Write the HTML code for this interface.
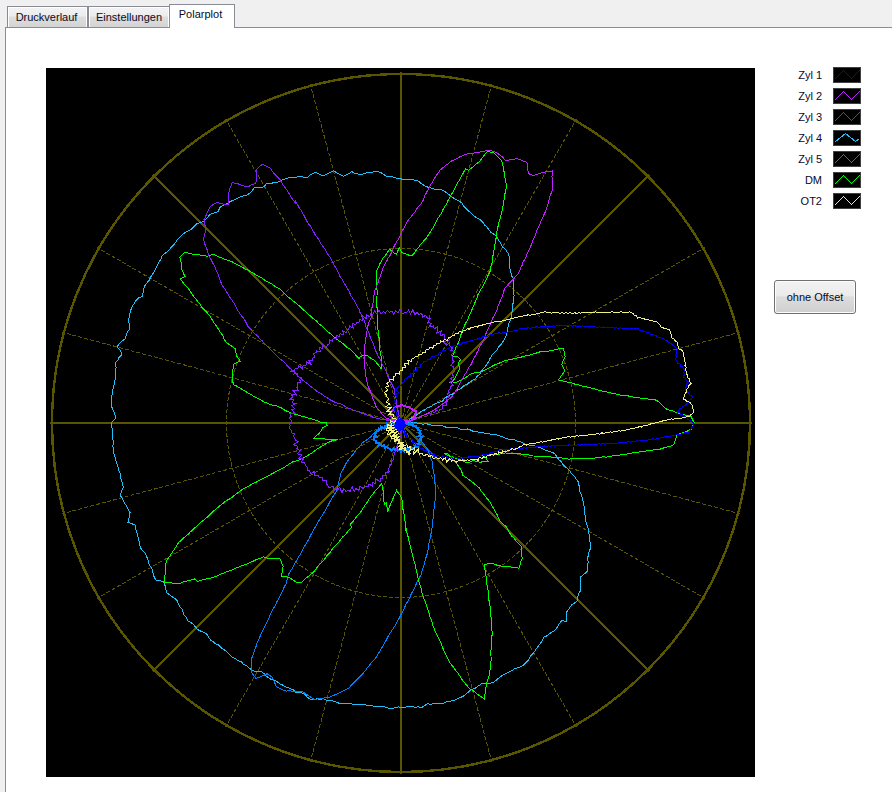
<!DOCTYPE html>
<html><head><meta charset="utf-8">
<style>
*{margin:0;padding:0;box-sizing:border-box}
html,body{width:892px;height:792px;overflow:hidden;background:#f0f0f0;font-family:"Liberation Sans",sans-serif;font-size:11px;color:#0a0a28}
.tab{position:absolute;border:1px solid #898c95;border-bottom:none;background:linear-gradient(#f3f3f3 0,#ececec 45%,#dedede 50%,#d4d4d4 100%);box-shadow:inset 1px 1px 0 #fff, inset -1px 0 0 #fff}
.tab span{position:absolute;left:0;right:0;text-align:center}
.panel{position:absolute;left:5px;top:27px;width:900px;height:800px;background:#fff;border-left:1px solid #898c95;border-top:1px solid #898c95}
.sel{background:#fff;box-shadow:none;z-index:2}
.lt{position:absolute;right:70px;height:16px;line-height:16px;text-align:right}
.lb{position:absolute;left:833px}
.btn{position:absolute;left:774px;top:280px;width:82px;height:34px;border:1px solid #707070;border-radius:3px;background:linear-gradient(#f2f2f2 0,#ebebeb 45%,#dddddd 50%,#cfcfcf 100%);box-shadow:inset 0 0 0 1px #fcfcfc;text-align:center;line-height:32px}
</style></head><body>
<div class="panel"></div>
<div class="tab" style="left:7px;top:6px;width:81px;height:21px"><span style="top:4px;left:-2px">Druckverlauf</span></div>
<div class="tab" style="left:88px;top:6px;width:82px;height:21px"><span style="top:4px">Einstellungen</span></div>
<div class="tab sel" style="left:169px;top:4px;width:66px;height:24px"><span style="top:3px;left:-3px">Polarplot</span></div>
<svg width="709" height="709" viewBox="46 68 709 709" style="position:absolute;left:46px;top:68px" shape-rendering="crispEdges">
<rect x="46" y="68" width="709" height="709" fill="#000"/>
<path d="M401 423L740 332.2M401 423L705 247.5M401 423L576.5 119M401 423L491.8 84M401 423L310.2 84M401 423L225.5 119M401 423L97 247.5M401 423L62 332.2M401 423L62 513.8M401 423L97 598.5M401 423L225.5 727M401 423L310.2 762M401 423L491.8 762M401 423L576.5 727M401 423L705 598.5M401 423L740 513.8" stroke="#5a5600" stroke-width="1" stroke-dasharray="4 2" fill="none"/>
<circle cx="401" cy="423" r="174.5" stroke="#5a5600" stroke-width="1" stroke-dasharray="4 2" fill="none"/>
<path d="M401 423L752 423M401 423L649.2 174.8M401 423L401 72M401 423L152.8 174.8M401 423L50 423M401 423L152.8 671.2M401 423L401 774M401 423L649.2 671.2" stroke="#5a5600" stroke-width="2" fill="none"/>
<circle cx="401" cy="423" r="349" stroke="#5a5600" stroke-width="2.4" fill="none"/>
<path d="M401 423L404.9 420.8L409.3 419.9L412 417.4L415.2 415.9L418.2 414L421 411.6L424.3 410.1L427.1 408.1L430.3 406.9L433.1 405.1L436.1 403.4L439.2 402.4L442.3 401.2L444.4 398.7L446.8 396.7L449.6 395.2L452.6 394L455 391.9L457.8 389.7L461.3 388.4L463.7 385.6L467.1 384.3L469.9 382L472.7 380.1L475.2 378.7L477.2 376.3L479.7 374.3L481.1 371.4L483.2 369.1L485.2 366.8L486.8 364.1L488.7 361.7L489.9 358.7L491.5 356L493.3 353.5L495.8 351.5L497.6 349L499.2 346.3L501.3 344L503.1 341.5L504.6 338.9L506.1 335.9L507 332.8L507.2 329.5L508.2 326.4L509 323.3L510.3 320.2L511.2 317.1L511.3 313.8L512.6 310.8L512.1 307.6L512.7 304.5L513.7 301.5L513.5 298.3L514.2 295.3L513.3 292.2L513.7 289L513.9 285.8L513.5 282.6L513.6 279.3L511.9 276.3L511.1 273.1L510.1 270L509.7 266.8L509.2 263.7L509.4 260.5L509.5 257.3L508.5 254L505.4 249.2L502.6 247L501.1 243.9L499.2 241.1L497.6 237.8L494.5 234.6L490.8 232.1L488.7 229.7L487 227L484.4 225L482.8 222.3L480.8 220.1L477.5 218.2L474.2 216.3L471.6 213.3L468.7 211.2L466.1 208.7L463.7 206L461.8 202.9L458.9 201L455.8 199.3L452.7 197.5L449.9 195.4L446.9 193.1L443.8 190.8L440.2 189.4L437 189.2L433.8 189L430.7 187.9L428.1 187.2L425.1 186L422.4 184.4L420 182.6L418 180.8L414.8 180.2L411.7 179.5L408.5 179.5L405.3 179.8L402.2 179.1L399.1 178.7L395.9 178L392.9 176.9L389.7 176.6L386.7 176.6L384.1 174.8L381.5 172.9L378.7 172L374.6 171.8L370.5 172.2L367.3 172.7L364.1 173.6L361.3 175L358.1 174.1L354.7 173.4L351.8 171.6L348.1 174.1L343.4 176.3L340.6 174.8L337.9 173.4L335.2 171.8L333.3 170.6L330.3 172.5L327.1 174.1L322.9 175.9L319.1 173.9L316.1 172.5L312.8 173.3L310.1 175L307.5 177.4L304.3 177.2L301.2 176.8L298.2 176.4L295.2 177.6L291.7 177.5L288.4 177.7L285.4 178.9L282.3 179.9L279.3 181.4L276.2 182.6L273.1 182.9L270.1 183.4L266.8 183.1L263.9 186.8L260.8 187.9L257.5 187.2L254.2 187.8L251.5 191.5L248.1 194.4L245.1 195.9L241.9 196.1L238.2 197.7L235.1 199.7L231.2 201.1L227.5 203.1L223.7 205.2L220.2 207.1L218 211.5L214 213.1L209.8 214.4L207 218L204 221.5L200.6 222.4L196.9 223.6L193.6 226.7L190.8 229.7L187.6 231.2L184.5 232.9L181.7 235.3L179.3 237.6L177.1 240.2L175.2 243L173.2 245.5L170.6 248.1L168.2 250.9L165.3 253.1L162.2 255.6L161.4 258.5L159.7 261L158.1 263.6L157 266L155.7 268.9L154.3 271.7L152.6 274.3L150.8 276.7L149.4 279.9L147.2 282.7L144.9 285.7L143.6 289.3L143 293.1L142.1 296.5L138.8 297.8L136.3 300.1L134.7 302.7L132.9 305.3L131.7 308L130.5 310.8L129.6 314.4L129 318L128.7 321.9L129.5 325.7L129.3 329.4L127.2 332.3L126.2 335.7L124.9 339L121.8 341.2L119.1 343.8L117.2 346.8L119.2 349.2L121 351.7L121.6 354.7L119.2 357.1L117.8 360.2L115.1 362.8L116.1 367.3L115.7 370.5L115.6 373.7L115 376.9L115 380.2L114.9 383.3L113.3 386.4L112.9 389.5L112.7 392.7L111.8 395.8L112 399L111.5 402.2L111.4 405.3L112.3 408.5L113.7 411.5L114.9 414.6L115.9 418.4L113.2 420.5L111.2 422.6L111.6 426.3L112.5 429.9L112 433.8L112.7 436.9L113 440L113.2 443.2L112.9 446.4L113.7 449.6L113.7 452.8L114.7 455.9L115.5 459L116.2 462.2L117.7 465.1L118.2 468.3L119.3 471.4L120.5 474.5L120.3 477.9L121.8 480.9L122.6 484.1L123.2 487.3L121.6 491.3L120.3 495.2L121.8 497.9L123.3 500.6L124.5 503.4L126.8 506.2L128.2 509.4L130.1 512.7L129.7 515.9L128.5 518.9L128 522.2L132 523.8L135.5 525.4L135.9 529.4L137.2 533.2L137.8 536.2L138.6 539.1L139.3 542.1L139.7 545.1L140.6 548.1L142.7 550.5L144.9 553L146.3 555.7L147.6 558.8L148.5 562.1L149.5 565.3L151.6 568.1L152.7 571.3L153.4 574.6L154.4 577.8L156.5 580.6L160.1 580.8L163.8 582.1L165.1 585.7L165.9 589.4L166.4 592.3L169.2 594.6L172.1 596.7L174.7 598.4L177.1 600.7L178.3 603.7L179.8 606.5L182.1 608.9L182.9 612L184.1 615.1L186.4 617.4L187.6 620.7L190.5 622.4L193.3 624.4L195.4 627L197.6 629.5L200.7 631.1L203.9 632.6L207 634.3L208.8 637.4L210.5 640.1L213.1 641.7L215.4 643.8L218.5 644.8L220.6 647.1L222.9 649.1L225.7 650.6L227.9 652.7L230.2 655.2L232.8 657.4L235.6 658.9L238.5 660.8L241.2 661.6L243.3 664.3L246.5 665.8L249.1 668L251.3 669.7L254.3 671.1L257.6 671.3L261.1 671.5L264.1 673.7L266.7 676.5L269.7 678.7L273.3 680.1L276.7 681.2L279.4 683.6L282.6 685.1L285.6 686.8L289.5 688.2L293.1 689.8L296 692.6L301.4 692.6L304.8 694.2L307.4 697.2L310.7 699.4L313.9 699.7L317 698.7L320.2 699.4L323.5 698.6L326.4 700.1L329.6 700.6L332.9 701L336 701.9L339 703.2L342.3 703.1L345.5 703.2L348.6 703.9L351.8 704L355 704.1L358.1 704.4L361.3 704.4L364.5 704.7L367.6 705.2L370.7 705.6L373.9 706.3L377 706L380.2 706.1L384 706.8L387.7 707.9L391 708.4L394.7 707.9L398.4 707L402.2 707.3L405.4 707.1L408.5 706.2L411.8 706L414.8 707.3L418.1 706.8L421.4 707.8L424.4 705.7L427.5 703.8L430.7 704.2L433.8 703.6L437 703.4L440.2 703.5L443.5 703.3L446.5 701.8L449.8 701.4L453 700.6L456.1 699.5L459.1 698L462.2 696.7L464.9 695.3L467.9 692.4L471.1 689.5L474.8 688.4L477.8 686.3L481 684.1L484.1 683L487.5 683.3L490.8 683L494.1 682.1L496.9 679.5L499.9 677.1L503 674.9L506.3 673.5L509.3 671.6L512.5 670.2L515.1 668.5L518.3 667.8L521.2 666.7L523.6 664.8L525.9 662.7L528.7 660L530.3 656.4L533.3 653.1L535.8 649.6L538 646.6L540.2 643.6L542.3 640.5L544.2 637L547.1 635.7L549.5 633.5L552.3 632L554.6 630.6L557 627.6L558.8 624.3L561.8 620.4L566.5 621.8L566.3 618.6L566.6 615.4L566.5 612.2L568.4 609.8L570.1 607.2L571.6 604.8L576.9 601.5L577.6 597.6L578.6 593.8L580.8 590.2L580.1 587L580.7 583.8L581 580.7L580.3 577.1L583.8 574.5L587.2 571.3L587.3 568.1L587.7 564.9L588.2 561.8L587.5 558.5L588.3 555.4L589 552.2L590.1 549.2L591 545.8L590.3 542.6L589.2 539.6L589.3 536.4L588.9 533.3L588.6 530.1L587.6 527L586.4 523.5L585.6 520L585.3 516.3L584.5 512.9L584.7 509.5L584 506.3L583.4 503.1L582.7 499.9L582 496.8L581 493.7L579.3 490.7L579.3 487.4L578.8 484.1L577.8 480.9L575.8 478.5L574.1 475.8L571.5 473.8L570.1 470.9L567.9 468.7L565.3 466.8L563.1 464.5L561.3 461.7L558.8 459.8L557 457.1L555.2 454.3L552.5 452.3L549.2 451.5L546 450.4L543 449L539.9 447.6L536.7 446.6L533.6 445.5L530.1 445.2L526.9 444.5L523.7 443.6L520.8 441.8L517.5 441.1L514.5 439.9L511.1 439.6L507.8 438.9L504.8 437.8L501.7 436.5L498.6 435.4L495.4 434.7L492.1 434.6L488.9 433.8L485.7 433.3L482.4 432.7L479.1 432.6L476 431L472.9 431.2L470 429.8L467.1 428.9L463.8 429.7L460.8 429.2L457.9 428.1L454.9 427.1L451.8 427.2L448.7 427.2L445.6 427.1L442.7 425.7L439.6 425.9L436.3 425.3L432.9 425.5L429.7 424.8L426.4 423.6L423 424.2L419.8 423.2L416.5 423L413.1 422.1L410.1 422.2L407.1 423L404 422.4L401 423" stroke="#20c0f8" stroke-width="1" fill="none"/>
<path d="M388.5 423.8L384.1 426.8L380.1 428.7L376.3 430.8L373.3 433.9L370.3 437.1L367.7 439L365.2 441L362.4 442.7L360.1 446L357.4 448.8L354.7 451.7L353.1 454.3L351.1 456.6L349.2 459L347.3 461.3L345.7 463.9L344.3 467L342.8 470L341 473L340.2 476.4L339.4 479.8L338.5 483.2L337.7 486.6L336.9 490.1L335.4 492.9L333.6 495.4L332.1 498.2L330.4 500.7L329 503.6L327.5 506.3L325.9 509L324.5 511.7L322.9 514.4L321.1 517L319.5 519.6L317.9 522.3L316.5 525.1L314.8 527.7L313.2 530.4L311.8 533.2L310.3 535.9L309.1 538.8L307.4 541.4L305.9 544.1L304.2 546.8L302.7 549.5L301.3 552.3L299.9 555.1L298 557.7L296.6 560.6L295 563.3L293.5 566.1L291.9 568.9L290.2 571.6L288.4 574.3L287.7 577.5L286.7 580.6L286 583.8L284.5 586.6L283.1 589.5L281.9 592.3L280.5 595.2L279.1 598L277.4 600.6L276.1 603.4L274.8 606.3L273.1 609L271.6 611.7L270.3 614.6L269.2 617.5L267.8 620.4L266.5 623.2L265.1 626L263.7 628.9L262.3 631.6L260.9 634.4L259.6 637.5L258.1 640.6L256.9 643.7L255.9 646.9L254.7 650.1L253.5 653.3L252.4 656.4L251.3 659.6L251.5 662.7L251.4 665.9L251.1 669L251.3 672.1L253.6 675.3L255.9 678.5L259.9 677.1L263.8 675.3L267 673.7L271.9 676.9L273.4 680L274.9 683.2L276.4 686.6L279.5 688.2L282.6 689.8L285.9 691.1L289 690.9L292 691.1L295.1 691.3L298.2 691.2L301.2 691.2L304.5 692.9L307.6 695L310.7 697.2L313.9 699.3L317.1 699L320.2 698.8L323.4 698.2L326.5 697.6L329.5 697.2L332.8 695.8L336 694.3L339.2 692.9L342.4 691.3L345.5 689.7L348.8 688.1L351.2 685.5L353.7 683L356 680.3L358.7 677.9L361.1 675.3L363.3 673.1L365.3 670.7L367.1 668.2L369 665.8L370.9 663.4L373 661.1L375.1 658.8L376.9 656.3L378.3 653.5L380.1 650.8L381.7 648.1L383.3 645.3L384.8 642.5L386.4 639.8L387.8 637L389.4 634.2L391.1 631.6L392.9 629.1L394.5 626.5L396.2 623.9L397.6 621.2L399 618.5L400.3 615.8L401.9 613.2L403.3 610.5L404.5 607.7L405.7 604.9L407.1 602.3L408.6 599.6L410 596.8L411.3 593.9L412.8 591.2L414.4 588.5L415.6 585.6L416.8 582.7L418.2 579.9L419.7 577.1L421.2 574.4L422 571.2L423.1 568.1L424.1 564.9L424.9 561.7L425.6 558.5L426.8 555.5L427.5 552.3L428.3 549.1L428.6 545.9L429.1 542.8L429.9 539.6L430.4 536.5L431.2 533.3L431.7 530.2L432.1 527L432.4 523.8L432.8 520.6L433.2 517.4L433.8 514.3L433.8 511.1L434.1 507.9L434.4 504.7L435 501.5L435.1 498.3L435.2 495.1L435.5 492L435.2 488.9L435.2 485.9L434.9 482.8L434.6 479.8L434.3 476.7L434 473.7L433.3 470.7L432.7 467.7L432.6 464.6L432.3 461.6L430.6 457.9L429.6 454.1L428.2 450.3L426.2 447.5L424.3 444.7L422.2 442L420.7 438.9" stroke="#0080ff" stroke-width="1" fill="none"/>
<path d="M400.4 422.4L398.8 421.2L397.7 425L395.8 421.9L394.6 424.7L393 423.2L391.5 423.6L390 423.4L389.7 425.5L386.7 423.7L387 427L384.9 426.6L384.5 428.6L381.3 426.6L381.4 429.5L378.7 428.3L378.5 430.7L376.9 431.2L376.2 432.7L374.3 433.7L376.5 436.7L373.8 437.2L374.1 438.2L374.2 440.3L376.1 440.7L376 443.1L378.6 442.8L378.5 446L381 444.2L382.1 446.2L384.3 445L385.1 447.6L387.2 447L388.5 448.5L390.1 448.6L391.3 450.8L393.4 448.5L394.8 449.8L396.6 448.8L398 450.6L399.5 449.5L401.1 451.8L402.7 448.9L404.3 451.4L405.9 449.3L407.8 451.1L408.8 449.1L410.8 449.6L411.8 447.4L414.1 448.7L415 446.2L418.1 447.1L416 444.1L419.3 443.9L418.4 441.5L419.8 440.4L420.2 439L422 437L418.5 436.1L421.1 433.9L419.3 432.6L420.3 430.8L418.2 430.1L417.8 428.1L416.1 427.6L415.8 425.6L413.2 425.9L413.1 423.9L411.4 425.2L410 423.2L408.2 424.7L406.7 423.4L405.1 423.6L403.7 422L402 422.7L400.4 422.4" stroke="#0080ff" stroke-width="2" fill="none"/>
<path d="M381.9 368.3L382 364.9L381.6 361.5L381.5 358.2L380.6 354.2L379.8 350.1L379.9 346.7L380 343.3L379.5 340L378.9 336.9L378.8 333.7L378.2 330.6L377.6 327.5L377.8 324.3L377.3 321.1L377.2 318L377.1 314.8L377.3 311.6L377.1 308.4L376.8 305.2L376.6 302L376.8 298.8L377 295.6L377.3 292.4L376.9 289.2L377 286L376.9 282.8L377 279.6L376.7 276.4L376.7 273.2L376.9 270L378.8 267L380 263.6L381.7 260.5L383.5 257.5L385.7 255L387.5 252.1L389.8 249.3L392.7 252L396.3 254.4L397.7 251.2L399.3 247.8L402.2 252.8L405.4 253.7L408.5 255L411.9 256L414.1 253.4L415.9 250.5L418.2 248L420.1 245.2L422.2 242.6L424.5 240.1L426.7 237.6L428.5 234.7L430.5 232L432.1 229.2L433.8 226.4L435.3 223.6L436.7 220.6L438.3 217.8L440.1 215.1L442 212.4L443.1 209.3L444.8 206.5L446.6 203.8L447.7 200.9L449.5 198.4L450.6 195.6L452.3 193L453.8 190.4L455.3 187.8L456.6 185L458 182.3L459.6 179.7L461 177L462.6 174.4L463.9 171.7L465.4 169L468.3 170.3L470.9 168.5L473.3 166.6L475.5 164.5L478.1 162.7L480.6 160.1L482.8 157.2L485 154.3L487.5 151.5L490.7 152.1L494.1 152.9L496.6 155.7L499.4 158.2L501.9 161.1L502.4 164.1L503.3 167L503.6 170L504.4 172.9L504.7 175.9L505.1 178.9L505.7 181.9L506.7 184.8L506.1 188L505.7 191.1L504.8 194.2L504.8 197.4L504 200.5L503.3 203.7L502.9 206.8L502.1 209.9L501.7 213.2L500.6 216.3L500 219.5L498.9 222.6L498.1 225.7L497.7 229L496.8 232.1L496 235.2L496 238.5L495.5 241.6L494.8 244.8L494.5 248L493.6 251.1L493.3 254.2L492.6 257.4L492.4 260.6L491.8 263.7L490.9 266.8L490.7 270.1L489.4 272.9L487.9 275.7L486.6 278.5L485.4 281.4L484 284.2L482.6 287.1L480.8 289.6L479.3 292.4L477.7 295.1L476.9 298.1L475.5 300.9L474.6 303.9L473.3 306.7L472 309.5L471 312.3L469.5 315.1L468.4 317.9L466.9 320.9L465.2 323.9L464.1 327L462.2 329.9L461.3 333.3L460.5 336.7L459.3 340L458.2 343.2L456.5 346L455.3 349.1L453.9 352.7L452.4 356.5L457.4 356.3L460.7 359.4L458.4 363.3L459.8 368.5L457.4 373.4L454.6 378.6L452.4 381.5L449.5 382.9L452.3 381.7L455.5 382.7L460.5 380.5L463.4 378.7L466.3 377.1L469.3 375L472.6 373.3L475.6 372.8L478.7 372.4L481.8 371.6L484.7 370.3L487.2 368.7L490 367.4L492.9 365.8L495.8 364.4L498.9 363.3L501.8 362L504.9 360.8L508.1 360L511.3 359.4L514.5 358.8L517.6 357.8L520.8 357.2L523.9 356.4L527 355.3L530.3 355L533.4 353.9L536.5 353L539.6 352L542.9 351.5L546.3 351.3L549.8 350.9L553.1 350.2L556.5 349.4L559.9 348.6L563.5 348.5L564.2 352.4L565.1 356.4L563.4 360.3L561.8 364.3L563.1 367.6L564.7 370.4L562.9 373.8L560.5 376.8L558.7 379.9L561.8 380.8L565 381.6L568.2 382.2L571.4 382.8L574.4 384L577.7 384.5L580.8 385.5L583.9 386.6L587.1 387L590.3 387.7L593.4 388.7L596.5 389.5L599.7 390.4L602.8 391.4L606 391.8L609.2 392.5L612.4 393.3L615.5 393.8L618.6 394.8L621.8 395.4L624.9 395.9L628.1 395.9L631.2 396.7L634.4 397.2L637.6 397.5L640.7 398.2L643.9 398.6L647.1 398.9L650.3 399.2L653.4 399.7L656.8 400.2L659.1 402.3L661.3 404.5L663.5 406.6L665.9 408.8L669 409.9L672.3 410.8L675.4 412.1L678.6 413.2L681.7 414.2L684.9 414.9L688.1 415.5L691.2 416.4L692.5 419.7L694.4 422.7L692.6 425.7L691.3 429.2L688.5 430.5L685.7 431.8L682.7 432.8L679.7 433.8L676.7 435.2L675.9 438.5L674.7 441.5L673.9 444.8L670.4 446.1L666.7 447L663.2 448.1L659.6 449.3L656.5 449.7L653.3 449.9L650.2 450.6L647 450.9L643.8 451.3L640.7 451.6L637.6 452.3L634.4 452.6L631.2 453.1L628.1 453.8L625 454.3L621.8 454.6L618.7 455.3L615.5 455.2L612.3 455.9L609.2 456.6L606.1 457.1L602.8 456.9L599.7 457.5L596.6 457.9L593.4 458.2L590.3 458.4L587.1 458.2L583.9 458.2L580.8 458.2L577.6 458.3L574.5 458.9L571.3 458.9L568.1 459.1L565 458.5L561.8 458L558.7 457.6L555.5 457.8L552.4 457.2L549.2 456.7L546.1 456.3L542.9 456.5L539.7 456.4L536.5 456.2L533.4 456L530.4 455.2L527.4 454.7L524.3 454.4L521.2 454L518.2 453.8L515.1 453.7L512 453.7L508.9 453.6L505.9 452.9L502.1 453.7L498.3 454.3L494.5 454.6L490.7 455.1L486.9 454.8L483.4 454.3L481.9 455.3L485.7 457.8L488.2 461.8L485 461.4L481.8 461.6L480.7 462.6L476.9 461.4L473.1 460.6L467.9 463.1L464.8 461.8L461.7 460.3L458.3 459.2L455 457.8L451.6 456.5L447.7 455.2L444 453.6L447.9 454L450.2 457.1L453 459.9L455.7 462.7L457.8 465.2L459.6 468L461.4 470.6L463 475.4L465.5 477.2L468 478.9L470.4 480.7L473.5 483L476.4 485.6L479.5 488.1L481.1 490.8L483.2 493.2L484.8 495.9L486.9 498.3L489 500.7L490.7 503.3L492.2 506.1L493.9 508.8L495.2 511.6L496.9 514.3L498 517.2L499.4 520.1L501.6 522.5L504 524.8L506.4 527L508.1 530.1L509.7 533.2L511.6 536L514.1 538.2L516.1 541L518.6 543.3L521 545.9L521.4 549.1L521.3 552.3L521.8 555.4L522.3 558.6L520.9 561.6L520.2 564.9L519 568.1L515.9 567.7L512.8 567.2L509.6 566.8L506.5 566.5L503.3 566.4L500.1 565.8L496.9 565.2L493.8 564L490.6 563.1L487.4 563.8L484.4 564.9L484.9 568L485.1 571.2L485.5 574.4L486.3 577.5L486.6 580.6L486.7 583.8L487.4 587L488 590.1L488.5 593.3L488.6 596.4L488.8 599.6L489.5 602.7L490 605.9L490.3 609L490.6 612.2L490.8 615.4L491.3 618.5L491.5 621.7L491.9 624.8L491.8 628L492 631.2L492.2 634.3L491.7 637.5L492 640.6L491.8 643.8L491.2 646.9L491 650.1L490.9 653.2L491 656.4L491.1 659.6L490.8 662.7L490.9 665.9L490.3 669.1L489.5 672.3L489.1 675.5L488.2 678.6L487.2 681.7L486.4 684.8L485.8 688L485.3 691.6L484.8 695.3L484.2 699.2L481.7 697.2L479 695.4L476.5 693.4L474 691.4L471.3 689.7L468.6 687.9L466.8 685.3L464.8 682.9L462.7 680.5L461 677.8L459.3 675.2L457.5 672.6L455.5 670.1L453.7 667.5L451.8 665.1L449.9 662.6L448.4 659.8L446.9 657L445.7 654L444.1 651.3L442.9 648.3L441.8 645.3L440.6 642.4L439.3 639.5L437.7 636.7L436.4 633.8L435.1 630.9L433.9 628L432.8 625.1L432 622.2L431.2 619.2L429.9 616.4L429.1 613.4L428.2 610.5L427.1 607.6L426.1 604.7L425.4 601.7L424 598.9L423.1 596L421.9 593.1L421.3 590.1L420.8 587.1L419.9 584.3L418.8 581.4L418.2 578.5L417.6 575.6L417 572.6L416.2 569.7L415.5 566.8L414.9 563.8L414.1 561L413.2 558.1L412.8 555.1L411.7 552.3L411 549.1L410.1 545.9L409.5 542.7L408.4 539.7L408 536.4L407 533.3L405.9 530.2L405.7 526.9L406.6 530L405.8 526.8L405.4 523.5L404.9 520.3L404.6 517L403.9 513.7L403.2 510.5L402.6 507.3L402.3 504L402.1 500.6L400.6 495.5L398.5 493.2L396.6 490.5L395 494L393.5 497.4L392 500.8L390.4 504.5L388.9 508.2L387.5 512.1L387.1 508.7L386.9 505.3L386.7 502.1L384.3 504.5L383.8 501L383.6 497.5L383.4 494.1L383.2 490.5L382.4 487.1L381.6 483.7L379.5 486.1L377.7 488.6L375.4 490.8L373.5 493.3L371.3 495.5L369.6 498.4L367.8 501.2L366 504L364 506.7L362.2 509.5L360.5 512.4L358.2 514.7L356.2 517.2L354.3 519.8L352.2 522.3L350.1 524.6L351.9 527.1L349.6 529.4L347.5 531.8L345.5 534.4L343.1 536.6L340.9 539L339.2 541.8L336.9 544.1L334.6 546.4L332.5 548.8L330.8 551.6L328.5 553.9L326.4 556.3L324.6 559.1L322.6 561.7L320.1 563.8L318 566.2L316.1 568.8L314.1 571.4L311.6 573.7L309.1 575.9L306.3 577.8L303.8 580.1L301.3 582.5L296.1 582.1L292.7 579.6L289 577.6L285.2 576.5L281.4 576L282 572.8L282.5 569.7L283.1 566.3L281.5 562.4L279.6 558.1L275.9 558.6L272.2 558.4L268.6 558.5L263.7 556.8L260.6 558.2L257.4 559.2L254.3 560.6L251.2 562.1L248.1 563.5L245 564.8L241.8 565.8L238.7 567.2L235.5 568.2L232.8 569.6L229.9 570.6L227.1 571.7L224.4 572.8L221.5 573.7L218.9 575.3L216 576.2L213.3 577.5L210.1 578.2L207 578.9L203.8 579.5L200.7 580.5L197.5 581.3L194.3 578.8L190.9 580.2L187.4 581L183.9 581.8L180.5 583.1L177 583.9L173.9 583.3L170.7 582.7L167.5 582.6L164.7 582.3L164.8 578.8L165 575.4L165.5 572L165.3 568.5L165.8 565.1L166.1 561.8L167.7 559L169.7 556.4L171.4 553.6L173.2 550.9L175 548.2L176.9 545.6L178.5 542.7L180.9 540.5L183.2 538.3L185.7 536.2L188.2 534.2L190.4 531.8L192.9 529.8L195.2 527.5L197.5 525.3L199.7 523.2L202.1 521.2L204.6 519.5L206.9 517.4L209.2 515.5L211.3 513.3L213.5 511.1L215.8 509.1L218.2 507.2L220.5 505.2L222.9 503.4L225.2 501.3L228 499.8L230.7 498.3L233.2 496.4L235.6 494.4L238.1 492.6L240.6 490.7L243.2 489L246 487.7L248.7 486.1L251.3 484.4L254.1 483.1L257 481.8L259.7 480.2L262.4 478.7L265.2 477.3L268 475.9L270.8 474.4L273.6 473L276.3 471.3L279.1 470.1L281.8 468.5L284.6 467.1L287.2 465.3L289.8 463.7L292.5 462L295.7 461.1L298.9 460L301.9 458.7L304.9 457.1L307.6 455.6L310.3 454L312.9 452.2L315.4 450.2L318.4 448.3L321.4 446.5L324.4 444.7L327.5 442.9L330.6 441.2L334.5 440.4L338.2 439.1L333.6 439.7L330.6 439.7L327.6 439.4L324.2 438.8L320.8 438.5L317.4 438.1L314 438.3L316.4 435.7L319 433.5L320 432.1L321.8 429.6L323.2 427.3L327 425.3L326.8 423L321.4 422.5L318.5 421.2L315.4 420.2L312.3 419.2L309.3 418.2L306.2 417.6L303.3 416.4L300.2 415.8L297.3 414.6L294.2 414.1L291.3 413L288.2 411.8L285.2 410.4L282.5 408.5L279.5 407.1L276.4 405.9L273.2 405.2L270 404.5L267 403.1L263.9 402L261.3 400.3L258.6 398.7L255.6 397.5L253 395.8L250.4 394.1L247.6 392.7L245 390.8L242.1 389.5L239.5 387.7L236.7 386.1L233.6 384.8L232.6 380.9L232.1 376.9L232.8 373.8L232.8 370.6L233.2 367.4L233.8 364.3L236.9 362.5L240.3 361.1L237 356.4L235.9 352.5L235.3 348.7L232.2 346.5L229 344.4L226 342.2L224.2 339.1L222.9 335.8L220.9 333.2L219.2 330.4L217.5 327.7L215.6 325.1L213.7 322.4L212.1 319.6L210.4 316.7L208.3 314.1L206.1 311.7L203.8 309.3L201.5 306.9L199.8 304L197.7 301.4L195.9 298.9L193.8 296.5L191.9 293.9L190.2 291.3L188.4 288.7L186.3 286.3L184.1 283.9L182.1 281.4L180.3 279.1L184.9 276.3L183.4 273.1L181.9 270L181.7 266.8L181.3 263.7L180.6 260.5L179.9 257.2L182.3 254.8L184.9 252.4L188.1 253.1L191.2 253.9L194.3 254.6L197.5 254.5L200.7 255.2L203.8 255.7L207.1 256.2L210.2 255.3L213.3 254.2L216.4 255.7L219.5 257.1L222.7 258.3L225.8 259.7L229 260.6L231.9 261.7L234.5 263.2L237.1 264.8L240 265.8L242.6 267.4L245.2 269L248 270L250.6 271.7L253.2 273.3L255.9 274.8L258.6 276.2L261.3 277.7L263.8 279.5L266.3 281.3L269 282.7L271.8 284L274.3 285.9L276.8 287.6L279.6 288.9L281.9 291L284 293.3L286.3 295.4L288.7 297.3L291.1 299.2L293.4 301.3L295.9 303.1L298.3 305.1L300.7 307L302.8 309.3L305.1 311.3L307.4 313.4L309.7 315.4L312 317.5L314.5 319.4L316.9 321.3L318.8 323.7L321.3 325.7L323.8 327.5L325.9 329.7L328.1 331.9L330.6 333.7L332.8 335.9L335.3 337.8L337.6 339.9L340.2 341.7L342.8 343.4L345 345.6L347.4 347.6L350 349.2L352.3 351.6L354.7 353.8L356.8 356.4L359.2 358.7L360.3 356.5L363.2 355.5L368 356L371 358.3L374.3 360.3L377.6 364.1L380.7 368L381.1 369.1L381.9 368.3" stroke="#00ff00" stroke-width="1" fill="none"/>
<path d="M401 423L397.8 422.9L394.7 421.7L391.5 421.5L388.4 420.5L385.4 419.9L382.1 419.9L379.1 418.8L376 418L372.9 417.3L370.1 415.7L366.9 415L363.9 413.9L361 412.8L358 411.5L355 410.6L352.1 409.6L349.3 408.4L346.4 407.4L343.8 405.6L341.2 404.1L338.2 403.3L335 402.2L331.9 400.7L328.9 399.1L326.1 397.1L323.3 395.4L320.6 393.3L317.4 391.8L314.8 389.5L312.1 387.4L309.3 385.4L306.8 383.2L303.3 380.7L300.1 377.9L297.3 375L294.5 372.2L291.5 369.7L288.6 367.1L286 364.2L283.7 361.7L281 359.7L278.6 357.4L276.2 355.1L273.7 352.8L271.5 350.3L269 348L266.6 345.7L264.2 343.4L262.1 340.7L259.5 338.6L257.5 335.9L254.9 333.7L252.4 331.5L250.5 328.7L247.8 326.5L246.6 323.5L245.1 320.7L243.5 318L241.3 315.6L239.5 312.9L237.6 310.4L236.4 307.4L234.9 304.5L233.1 301.9L231.3 299.3L229.4 296.7L228 293.8L226.2 291.2L224.6 288.4L222.5 285.9L221.2 282.8L219.7 279.7L218.9 276.4L217.7 273.2L216.2 270.2L215 266.8L213.2 263.8L211.6 260.6L209.8 257.6L208.2 254.4L207.5 250.7L206.1 247.2L204.7 243.7L203.6 240L204.1 236.3L205.1 232.7L205.2 229L205.2 225.8L204.1 222.7L204 219.6L205.6 216.5L206.9 213.1L208.5 210L210 206.7L213.1 204.7L216.5 202.7L220.2 203.2L223.8 204.2L228.1 204.4L228.6 201.1L228.3 197.7L228.5 194.4L229.3 191.2L229.9 188.1L231.2 185.2L232.3 182.1L235.3 183.6L238.6 184L241.7 185.4L244.9 186.2L247.9 187L251.7 184.7L255.9 183.2L256.2 179.7L256.1 176.1L256.4 172.5L257 169.2L259.5 166.6L262.2 164.3L266.3 166L270.5 168.1L272 170.7L273.7 173.2L275.9 175.3L278.1 177.4L280.1 179.7L281.6 182.6L283.3 185.3L285.3 187.8L287.2 190.4L288.8 193.2L290.4 195.9L292.1 198.7L294 201.2L295.9 203.8L295.3 200.3L296.5 203.2L298.2 205.8L299.5 208.5L301.5 210.9L302.7 213.8L304.5 216.3L305.8 219.1L307.2 221.9L309 224.4L311 226.7L312.1 229.6L313.8 232.2L315.3 235.1L317.4 237.7L319.4 240.4L320.8 243.4L322.7 246.1L324.7 248.8L326.4 251.6L328 254.6L330.1 257.2L331.4 260L333 262.8L334.5 265.6L336.3 268.3L337.5 271.2L338.9 274.1L340.3 277L342.2 279.5L343.7 282.4L345.4 285L346.8 287.9L348.8 290.4L350 293.4L351.3 296.3L353.1 298.9L354.8 301.6L356.1 304.4L357.5 307.1L359.2 309.6L360 312.6L361.6 315.2L363.1 317.9L364.3 320.7L365.2 323.5L365.7 326.6L367.1 329.2L368.8 332.7L369.9 336.4L371.6 339.9L373.2 343.1L374.2 346.7L375.4 350.1L377 353.5L378.6 356.9L380.6 360.1L381.6 363L382.8 365.7L384.7 368.2L386.1 371.1L387.2 374.3L388.3 377.3L389.7 380.3L391.3 382.9L392.5 385.6L394 388.4L394.7 392.5L395.3 396.6L396.3 400.6L396.6 404.6L397 407.8L398.4 410.7L398.5 413.9L398.7 417.1L400 420L401 423" stroke="#8020ff" stroke-width="1" fill="none"/>
<path d="M401 423L403.1 422.7L404.8 421.2L406.9 421.1L408.8 420.3L411 420.2L412.7 418.8L414.8 418.4L416.6 417.4L418.7 417.1L420.5 416.1L422.7 415.9L424.5 414.8L426.5 414.3L428.3 413.1L430.8 414.1L432.2 411.8L434.6 412.5L436 410.1L438.6 411.2L440 409.5L442.6 408.7L442.9 405.6L446.9 405.5L446 402.5L447.8 400.9L446.2 398.3L449.3 396.8L447.2 394.3L449.1 392.6L448.8 390.4L450.4 388.7L450.2 386.6L453.4 385.2L450.1 382.3L452.6 380.7L450.9 378.3L454 377L451.8 373.8L454.4 371.9L453.5 369.6L453.7 366.9L450.7 365.1L454.2 361.5L452.1 359.6L452.6 357.7L451.3 354.5L454.2 351.6L451 350.3L452.5 347.8L450.2 346.9L449.4 342.6L446.1 345.5L445.6 344.3L443.5 341.9L447.3 340.5L444.3 339.3L444.9 334.8L440.2 335.2L441.5 330.8L436.9 333L437.4 327L434.2 328.8L433.2 326L429.2 326.9L431.3 323.6L427.8 322.1L429.9 318.8L427.2 317.9L425.7 315.4L422.7 316.9L421.7 313.4L418.8 314.6L417.2 312.5L414.9 314.5L412.8 309.9L410.7 314L408.6 310L406.5 312.7L404.4 312.9L402.3 313.8L400.2 309.2L398.1 312.9L395.9 310.7L393.8 314.3L391.7 311L389.7 312.4L387.4 310.5L385.5 313L383.2 311.5L381.3 313.9L378.9 310.4L377.1 314.3L374.7 310.9L372.9 314.6L370.6 313.6L369.8 316.7L366.6 315L366 318.6L361.7 314.8L362.8 320.6L359.6 319.7L359 322.1L356.5 322.2L355.9 324.7L352.2 323.3L353.3 328L349.2 325.9L348.9 328.9L347.2 329.9L346.8 332.7L343 331.1L343.1 334.4L340.1 333.9L339.5 336.4L336.6 335.8L336.2 338.9L333.2 338.1L332.7 341.2L329.4 339.9L329.5 343.8L327.4 344.5L326.7 347.1L322.7 344.7L322.4 348.1L319.4 347.9L320.4 351.3L316.8 351L316 352.9L313.3 353.3L314.7 357L312.7 358L312.9 360.8L308.9 360.2L310.9 364.3L306.8 362L305.7 365.6L303.3 365.2L302.3 368.8L298.9 365.7L297.6 368.7L295.3 368.4L293.8 370.7L289.7 371.8L294.5 369.8L294 374L297.9 373.1L297.9 376.7L301.7 377.9L299.6 379.6L300.7 382L297.4 382.9L297.9 385.7L296.9 387.7L298.4 391L293.2 390.7L296.5 394.6L291.8 394.5L292.4 397.1L290 399.3L293.7 400L292.1 402.8L295.7 403.6L291.8 405.4L294.8 408.8L291.6 409.7L294.8 413.2L289.7 413.7L291.1 416.3L289.1 418.3L292 421.1L289.3 423.1L290.1 425.6L289.6 428.3L291.4 430.5L291.2 432.9L294.4 433.5L293.6 436.2L294.8 437.9L295.1 439.8L298.2 441.6L293.5 444.7L297.6 446.4L296.9 448.9L300 450.4L297.4 453.8L301.8 454.9L298.4 458.8L303.4 458.9L301.4 462.4L304.7 462.9L305.4 465.4L307.1 467.1L307.4 470L309.6 471.1L310.9 473.6L314.4 471.5L314.5 475.8L318 475.3L319.4 477.7L322.8 477.8L323 480.6L326.1 480.6L326.3 483.4L327.5 485.3L328.8 487.8L333.4 486.2L333.6 491.8L335.7 488.5L337.8 490.1L339.8 487.2L341.9 492.9L343.9 488.5L346 491.7L348.1 490.2L350.1 491.3L352.2 486.8L354.2 491.4L355.8 488.7L358.8 490.1L360.1 486.2L363.5 488.8L365.3 486.6L368 486.8L368.9 484L372.5 486.4L372.9 482.4L375.8 483.7L375.9 479L380.1 481.6L380.3 478.9L383 478.5L382.9 475.3L385.6 475L385.3 472.4L389.4 472L388.1 469L389.8 467.5L390.1 465.3L391.8 463.8L391.3 461.3L393.4 459.5L393.1 456.9L394.3 454.7L394.6 452.3L396.2 450.3L396.3 447.8L397.6 445.7L398.1 443.4L399.2 441.2L399.5 438.9L400.5 436.7L399.8 434.3L400.4 432.1L400.6 429.8L401.1 427.6L400.8 425.3L401 423" stroke="#8020ff" stroke-width="1" fill="none"/>
<path d="M401 423L404.1 422.5L407.2 422.2L410.3 421.5L413.2 420.1L416.3 418.2L419.8 417.3L423 415.6L426.3 414.2L429 412.7L431.6 411.2L434.4 409.9L436.9 408.1L439.4 406.4L442.4 404.2L445.3 402L448.3 399.8L451.2 397.4L453.3 394.7L455.3 391.9L456.9 388.9L458.7 386L459.9 383.1L461.4 380.4L463.1 377.9L464.3 375.1L466.1 372.6L467.5 369.6L469.3 366.8L471.3 364.2L472.6 361.2L474 358.2L475.7 355.5L477 352.5L478.6 349.7L479.6 346.6L481.4 343.9L482.9 341L484.3 338.1L485.4 335.1L486.6 332L488.1 329.2L489.4 326.2L490.6 323.2L491.7 320.4L493 317.6L494.4 314.9L495.8 312.1L497.2 309.4L498 306.4L499.1 303.5L500.3 300.8L501.7 298L502.7 294.9L503.6 291.9L504.6 288.7L506.8 286.1L509 283.6L511.5 281.2L513.8 278.7L515.9 276.1L518.2 273.5L519.6 270.8L520.7 268L522.1 265.3L522.9 262.3L524.5 259.7L525.9 257L527 254.2L528.3 251.5L529.8 248.9L530.8 246L532 243.3L533 240.4L534.1 237.6L535.6 235L536.3 232L537.4 229.2L538.9 226.6L540.1 223.8L541 220.9L542.4 218.3L543.5 215.5L544.9 212.8L546 210L546.9 207.1L547.9 204.2L548.7 201.2L549.3 198.2L550.1 195.3L551.5 192.5L552.4 189.5L552.1 186.4L552.5 183.2L552.2 180.1L552 176.9L552.2 173.7L552.4 170.9L549.2 171.3L546 171.7L543 172.4L539.7 173.3L536.7 174.6L533.4 175.5L528.7 173.7L527.8 169.9L527.4 166L526.9 162.5L523.9 161.3L520.8 159.8L517.6 158.8L514.4 159.1L511.3 159.4L508.2 160.2L505.2 160.3L502.8 157.4L500 154.9L497 153.1L493.8 151.6L490.7 150.3L487.4 150.5L484.3 151.2L481.1 151.7L478 152.7L474.8 152.8L471.7 153.5L468.6 153.9L465.5 154.1L462.8 155.8L459.8 156.9L457 158.5L454.2 160L451.2 161.1L448.5 163.5L445.5 165.6L442.7 168L439.8 170.4L438 173.3L436 176L434 178.8L432.6 182L430.5 184.7L429.3 187.5L427.8 190.1L426.4 192.8L424.9 195.4L424 198.4L422.7 201.1L421.1 203.7L418.8 206.1L416.7 208.8L415 211.7L412.8 214.3L410.9 217.1L408.7 219.6L406.8 222.4L405.6 225.5L403.6 228.3L402 231.2L400.7 234.3L399.4 237.4L397.7 240.3L395.8 243.1L394.2 246.1L393 249.2L391.7 252.3L390.1 255.3L388.1 258L386.7 261.1L385 263.9L383.5 266.9L382.2 270L381.3 273.2L380.5 276.4L379 279.4L378 282.6L376.8 285.7L375.6 288.8L374.4 291.9L374 295.3L373.6 298.5L373.3 301.8L372.7 305L371.8 308.2L371.3 311.5L371.3 314.8L371 318.1L369.1 321.3L368 325.6L367.2 330L366.6 333.3L366.2 336.7L365.1 340L365.1 343.4L364.6 346.7L364.5 350.1L364.8 353.5L364.7 356.8L364.6 360.2L364.3 363.2L364.5 366.3L365.1 369.3L365.5 372.3L365.6 375.3L366.2 378.3L366.8 381.4L367.6 384.4L368.4 387.4L370.2 390.8L371.5 394.5L372.5 397.5L373.8 400.4L374.9 403.2L375.8 406.1L377.6 408.5L380.2 411.4L382.4 414.7L386.6 418.5L389.5 419.1L392.4 420.2L395.4 420.7L398.1 422L401 423" stroke="#c020ff" stroke-width="1" fill="none"/>
<path d="M400.4 422.4L396.8 419.8L392.2 420L391.4 416.2L390.7 412.6L392.9 409.9L394.3 407.4L398.1 406.3L401.6 405.2L405.5 406.3L409.4 407.4L413 409.8L416.4 411.3L415.2 414.5L414.6 417.5L412.2 420L409.3 421.4L404.8 421.4L400.4 422.4" stroke="#c020ff" stroke-width="2" fill="none"/>
<path d="M401 423L400.9 420.4L398.7 418.9L399.2 416.1L396.1 415L396.2 412.4L394.4 410.1L395.2 407.2L393.3 404.6L395.6 402.5L394.7 399.6L396.4 397.3L395.4 394.6L398.4 392.8L396.1 389.9L397.8 387.6L399.2 385.9L401.6 385.3L402.3 383L404.1 381.8L404.4 379.1L407 378.7L408.2 376.8L410.7 376.2L411 373.5L414 373.5L413.8 370.3L417.2 370.6L416.8 367.2L420.2 367.6L420.2 364.4L422.8 363.8L423.9 361.4L426.9 361.5L428.2 359.2L430.5 359.1L431.6 356.6L434 356.5L435.9 355.6L437.9 355L439.2 353L441.6 352.7L442.9 350.6L445.7 350.9L447 348.7L449.1 348.1L451 346.9L453.3 347L454.9 345.1L457.4 345.6L459.2 344L461.5 344L463.1 342.2L465.6 342.9L467.2 341L469.6 341.9L471.2 340.1L473.4 340.5L475.2 339.1L477.3 339.3L479.1 337.8L481.3 338.3L483 336.6L485.1 336.6L487.1 336.1L489.1 335.8L490.9 334.4L493 334.4L494.9 333.6L497 333.3L498.9 332.6L501 333.6L503 332.4L505.1 333.2L507.1 332.1L509.2 331.8L511.3 331.2L513.5 331L515.5 330.1L517.7 330L519.7 328.8L521.8 329L523.9 328.5L526 328.5L528.1 327.8L530.3 328.2L532.3 327.5L534.5 327.5L536.5 326.4L538.7 327.5L540.8 326.5L542.9 327.1L545 326.5L547.1 326.7L549.2 326L551.3 326.4L553.4 325.9L555.5 326.3L557.6 325.4L559.7 325.6L561.8 325.6L563.9 325.7L566 325.6L568.1 325.6L570.3 325.2L572.3 326.2L574.5 325.6L576.5 326.4L578.7 326.1L580.7 326.4L582.9 325.9L585 326.4L587.1 326.6L589.2 326.9L591.3 326.6L593.4 326.9L595.5 326.9L597.6 327.2L599.7 326.8L601.8 327.5L603.9 326.9L606 327.9L608.1 327.3L610.2 327.9L612.3 327.7L614.4 328.1L616.5 327.9L618.6 328.3L620.8 327.9L622.8 328.7L625 328.2L627 329.1L629.2 328.3L631.2 329.1L633.4 328.5L635.5 329L637.8 328.2L639.3 330.1L641.4 330.2L643.2 331.1L645.2 331.5L646.8 333L649.2 332.4L650.7 334.1L652.9 334.1L654.5 335.5L656.5 336L658.1 337.2L660.2 337.5L661.8 338.8L663.9 339L665.4 340.7L667.5 341L668.9 342.5L670.9 343.2L672.2 344.9L673.9 346L675.2 347.5L677.4 348.6L676.7 350.7L676.9 353L675.8 355.1L676.3 357.4L675.3 359.7L677 361L677.7 363.1L680 363.8L680.6 366.1L682.7 367L683.6 369L685 370.6L683.9 372.6L684.3 374.9L683.1 377.2L685.2 378.2L686.2 380.3L688.6 381.9L687 383.5L686.9 385.7L685.6 387.5L685.2 389.3L686.4 391.2L688.2 392.6L689.4 394.5L691.4 395.7L692.6 397.2L691.4 399.2L689.6 400.5L688.4 402.5L686.5 403.7L685.1 405.6L683.1 406.3L681.9 408L679.9 408.8L678.7 410.5L676.8 412L679.3 412.4L680.8 414.2L683.1 414.9L684.7 416.7L686.7 417.4L687.7 419.5L689.6 420.3L691.1 421.8L693.2 422.5L694.1 424L693.3 426L691.5 427.2L690.9 429.2L689.3 430.5L688.2 432.5L685.8 432.1L683.9 433.4L681.7 433.6L679.7 434.5L677.4 434.3L675.4 435.3L673.4 435.2L671.4 436L669.3 436L667.4 437.1L665.2 436.6L663.3 437.5L661.2 437.5L659.3 438.3L657.2 438.3L655.2 439.2L653.1 438.8L651.1 439.5L649 439.1L647.1 440.6L644.9 440.3L642.9 440.8L640.7 440.4L638.7 441.3L636.5 440.7L634.5 441.8L632.3 441.6L630.2 442.1L628.1 441.7L626 442.2L623.9 442.1L621.8 443L619.6 442.4L617.6 443.1L615.5 443.2L613.4 443.9L611.3 443L609.2 444L607 443L605 444.2L602.8 443.4L600.8 444.2L598.6 443.7L596.6 444.8L594.4 444.3L592.3 444.7L590.2 444.2L588.1 444.6L586 444.4L583.9 444.7L581.8 444.7L579.7 445.2L577.6 444.7L575.5 445.5L573.4 444.6L571.3 445.8L569.2 444.6L567.1 445.7L565 445.1L562.9 445.5L560.8 445.4L558.7 446L556.5 445.3L554.5 446.3L552.3 445L550.4 446.4L548.3 445.9L546.3 446.7L544.2 445.9L542.2 446.7L540.1 446.3L538.2 447L536.1 446.7L534.1 447.8L532 446.9L530 447.7L528 447.3L526 448.3L523.9 447.8L521.8 448.2L519.7 448.1L517.7 448.8L515.5 448.4L513.4 449.1L511.3 448.6L509.2 449.2L507.1 449.2L505 449.6L502.9 449.8L501 451.2L498.7 450.7L496.7 451.7L494.5 451.4L492.7 453L490.4 452.6L488.5 454.2L486.3 454.2L484.3 454.9L482.1 454.9L480.2 456.1L478.1 456.4L476 456.9L473.7 456.3L471.4 456.9L469.1 456.6L466.9 458.1L464.6 457.2L462.4 458.2L460.1 457.9L457.8 458.7L455.5 457L453.3 458.8L451.1 456.8L448.7 458.9L446.7 456.9L444.3 458.8L442.5 455.7L440 457.8L438.2 455.1L435 457.6L434.6 453.8L431.6 455L430.4 452.6L427.6 453.4L426.5 451L424.1 450.8L423.2 448.1L419.9 448.9L419.3 445.8L416.4 446L415.8 442.7L413 442.9L412.9 439.9L410.1 439.6L408.8 438L405.9 437.8L406.5 434.7L403.6 433.7L405.5 430.4L401.5 430L402.8 427L399.6 426.3L400.7 425.1L401 423" stroke="#0000ff" stroke-width="1" fill="none"/>
<path d="M401 423L401.4 418.9L397.4 420.2L395.8 418.5L392.8 418.6L393.5 414.1L388.9 414.8L391.2 411.8L387.2 411.2L391.2 407.5L385.8 406.9L389.5 403.9L386.2 401.8L389.2 399.1L386.6 396.9L386.1 394.6L384.5 392.3L388 390L385.5 387.2L388.8 386.5L386.9 383.2L389.3 382L389.2 379L393.3 380.1L393.4 377.1L395.3 376L395.9 373.6L399.3 374L399.6 371.1L402.4 370.7L402.1 367.3L405.7 367.7L404.2 363L408.2 364.1L408 360.6L411.1 361.3L411.8 359L413.9 358.3L415.2 356.7L417.7 357L418.7 354.3L421.6 355L422.6 352.3L425.1 352.3L426.2 349.8L428.7 349.9L429.8 347.4L432.7 348.3L433.7 345.9L435.8 345.4L436.9 343.1L439.7 343.8L440.5 341L443.2 341.6L444.3 339.4L447.2 340.5L448.3 338L450.4 337.5L452 335.9L454.3 335.8L455.4 333.3L458.1 333.9L459.2 331.5L462.1 332.4L463.4 330.4L465.6 330.4L467.2 328.6L469.5 329.3L471.1 327.2L473.3 327.7L475 326.1L477.3 327.1L479.1 325.6L481.2 325.8L483 324.6L485.1 324.7L486.9 323.3L489.1 323.8L491 323L493.1 322.9L494.8 321.5L497 321.9L498.9 321.1L501.1 321.4L502.9 320.2L505.1 320.5L507 319.3L509.3 319.4L511.3 318.5L513.5 318.2L515.4 317L517.7 317.2L519.7 316.1L521.9 316.6L523.9 315.6L526.1 315.6L528.1 314.8L530.3 315.2L532.3 314.3L534.6 314.7L536.5 313.5L538.8 313.7L540.7 312.3L542.9 312.4L545 311.7L547.1 312.6L549.2 312.1L551.3 313.1L553.4 312.5L555.5 312.7L557.6 312.6L559.7 313.3L561.8 312.7L563.9 313.3L566 312.7L568.1 313.3L570.2 312.6L572.4 313.7L574.4 312.6L576.6 313.4L578.7 312.8L580.8 313.1L582.8 312.3L585 313L587.1 312.2L589.2 312.4L591.3 312L593.4 312.6L595.5 311.6L597.6 312.6L599.7 312.2L601.8 312.2L603.9 312.1L606 312.6L608.1 312.3L610.2 312.2L612.3 311.8L614.4 312.4L616.5 312.2L618.6 312.5L620.7 311.7L622.8 312.3L624.9 312.2L627.1 312.3L629.2 311.9L631.1 312.4L633 313.3L634.2 315.1L636.3 315.9L637.5 318.1L639.8 317.3L641.8 318.6L643.9 318.7L645.9 319.8L648.2 319.5L650.2 320.5L652.3 320.7L654.3 321.5L656.5 321.6L658.1 323.3L659.9 324.6L660.8 326.9L662.9 327.6L664.8 329L667.1 328.9L669 329.6L670.3 331.4L670.6 333.6L671.6 335.5L671.9 337.8L674 338.9L675.2 340.9L677.5 342.1L677.6 344.3L678.1 346.4L678.4 348.9L681.2 349.7L682.9 351.7L684 354L683.8 356.5L684.7 358.7L684.8 361.2L685.5 363.2L684.9 365.4L686.2 367.4L685.4 369.6L686.5 371.6L686.4 373.8L687.8 375.5L687.9 377.8L689.7 379.2L689.8 381.6L691.3 383.3L689.2 385L688.3 387.6L686.5 389.5L686.3 392.1L684.8 394.2L684.3 396.7L683.2 399.3L685.5 399.9L687.2 401.5L689.6 402.1L691 403.8L692.2 405.6L692.3 407.8L693.5 409.5L693.6 411.5L692.8 413.6L690.8 414.6L689.7 416.5L687.5 416.1L685.6 417.3L683.5 417.4L681.5 418.1L679.4 418.1L677.3 418.3L675.3 418.4L673.3 419.4L671.1 418.8L669.2 419.8L667.1 419.7L665.3 421L663.1 420.8L661.2 421.6L659.1 421.9L657.3 422.9L655.2 422.9L653.2 423.7L651.1 423.7L649.3 424.8L647.2 425.1L645.3 425.9L643.2 425.9L641.4 427.1L639.1 426.4L637.3 427.9L635.2 427.7L633.4 428.9L631.2 428.4L629.2 429.7L627 429.1L625 430.6L622.8 430.1L620.8 431.2L618.6 430.4L616.6 431.8L614.4 431.6L612.4 432.2L610.2 431.9L608.1 432.7L605.9 432.3L604 433.4L601.7 432.8L599.8 434.3L597.5 433.4L595.5 434.3L593.4 434.1L591.3 434.8L589.2 434.7L587.1 435.3L585 435.2L582.9 435.9L580.7 435L578.7 436.2L576.5 435.7L574.5 436.4L572.3 436.6L570.3 437.1L568.1 436.6L566.2 437.6L564.1 437.2L562.2 438L560.2 438.2L558.3 439.1L556.2 438.8L554.4 439.9L552.3 439.6L550.4 440.5L548.3 440.3L546.5 441.4L544.4 441.3L542.5 442.1L540.4 441.8L538.6 442.9L536.5 442.7L534.5 443.9L532.3 443.7L530.2 443.9L528.1 444.2L526.1 445.2L523.7 444.2L522.2 446.1L520.1 446.6L518.4 447.9L516.3 448.4L514.5 449.6L511.9 448.8L509.8 450.4L507.4 450.8L505.1 451.5L502.8 450.9L501.5 453.4L498.9 451.8L497.7 454.8L495.1 453.1L493.7 455.4L491.3 454.4L489.6 456L487.3 455.3L485.9 457.7L483.5 456.8L482 458.6L479.5 457.2L478.2 460.1L476 459.8L473.8 459.5L471.6 459.3L469.5 460.5L467.3 459.7L465.1 460.9L462.9 459.9L460.8 460.7L458.6 460.3L456.2 462.3L454 460.3L451.7 461L449.6 458.7L446.7 462L445.4 457.5L442.6 459.9L440.7 457.9L438.2 458.6L436.1 457.7L433.5 458.4L431.7 455.8L429 456.3L427.1 454L423.9 456.1L422.1 453.6L419.2 454.3L418.2 449.2L413.8 453.7L414.2 448.1L410.7 450.3L410.1 446.8L407.2 448L407 444.6L402.1 447.2L402.3 442.9L399.7 442.5L398.2 440.5L394.4 441.6L394 438.2L391.2 438L390.4 435.1L387.6 434.1L389.1 431L386.2 430.1L387.2 428.3L387.1 424.3L391.8 426.5L390.4 420.7L394 422.7L397 418.8L398.8 422.4L401 423" stroke="#f0f080" stroke-width="1" fill="none"/>
<path d="M396 420L401 418L405 421L406 426L403 430L398 431L394 427Z" fill="#0000ff"/>
<path d="M393.3 425.1L389 427.8L393.3 427.9L388.9 430.6L394.4 430.3L390.9 432.8L395.8 432.3L391.5 437L397 434.8L394.9 437.8L398 437.3L394.5 441.3L399.6 439.4L399.5 441L398 443.6L402.3 442.7L398.5 446.7L403.8 445.2L399.3 449.6L404.9 447.9L404.9 450.1L406.4 450.4L406.8 452.2L409.3 451.3L408.9 454L411.1 453.4" stroke="#f0f080" stroke-width="1.5" fill="none"/>
</svg>
<div class="lt" style="top:67px">Zyl 1</div>
<svg class="lb" style="top:67px" width="28" height="16" shape-rendering="crispEdges"><rect x="0.5" y="0.5" width="27" height="15" fill="#000" stroke="#404040"/><path d="M2 12L10.5 3.5L18.5 11.5L27 3" stroke="#0000ff" fill="none"/></svg>
<div class="lt" style="top:88px">Zyl 2</div>
<svg class="lb" style="top:88px" width="28" height="16" shape-rendering="crispEdges"><rect x="0.5" y="0.5" width="27" height="15" fill="#000" stroke="#404040"/><path d="M2 12L10.5 3.5L18.5 11.5L27 3" stroke="#c020ff" fill="none"/></svg>
<div class="lt" style="top:109px">Zyl 3</div>
<svg class="lb" style="top:109px" width="28" height="16" shape-rendering="crispEdges"><rect x="0.5" y="0.5" width="27" height="15" fill="#000" stroke="#404040"/><path d="M2 12L10.5 3.5L18.5 11.5L27 3" stroke="#8020ff" fill="none"/></svg>
<div class="lt" style="top:130px">Zyl 4</div>
<svg class="lb" style="top:130px" width="28" height="16" shape-rendering="crispEdges"><rect x="0.5" y="0.5" width="27" height="15" fill="#000" stroke="#404040"/><path d="M2.5 11.5L12.5 3.5L22.5 11.5L26.5 8.5" stroke="#20c0f8" fill="none"/></svg>
<div class="lt" style="top:151px">Zyl 5</div>
<svg class="lb" style="top:151px" width="28" height="16" shape-rendering="crispEdges"><rect x="0.5" y="0.5" width="27" height="15" fill="#000" stroke="#404040"/><path d="M2 12L10.5 3.5L18.5 11.5L27 3" stroke="#0080ff" fill="none"/></svg>
<div class="lt" style="top:172px">DM</div>
<svg class="lb" style="top:172px" width="28" height="16" shape-rendering="crispEdges"><rect x="0.5" y="0.5" width="27" height="15" fill="#000" stroke="#404040"/><path d="M2 12L10.5 3.5L18.5 11.5L27 3" stroke="#00ff00" fill="none"/></svg>
<div class="lt" style="top:193px">OT2</div>
<svg class="lb" style="top:193px" width="28" height="16" shape-rendering="crispEdges"><rect x="0.5" y="0.5" width="27" height="15" fill="#000" stroke="#404040"/><path d="M2 12L10.5 3.5L18.5 11.5L27 3" stroke="#f0f080" fill="none"/></svg>
<div class="btn">ohne Offset</div>
</body></html>
